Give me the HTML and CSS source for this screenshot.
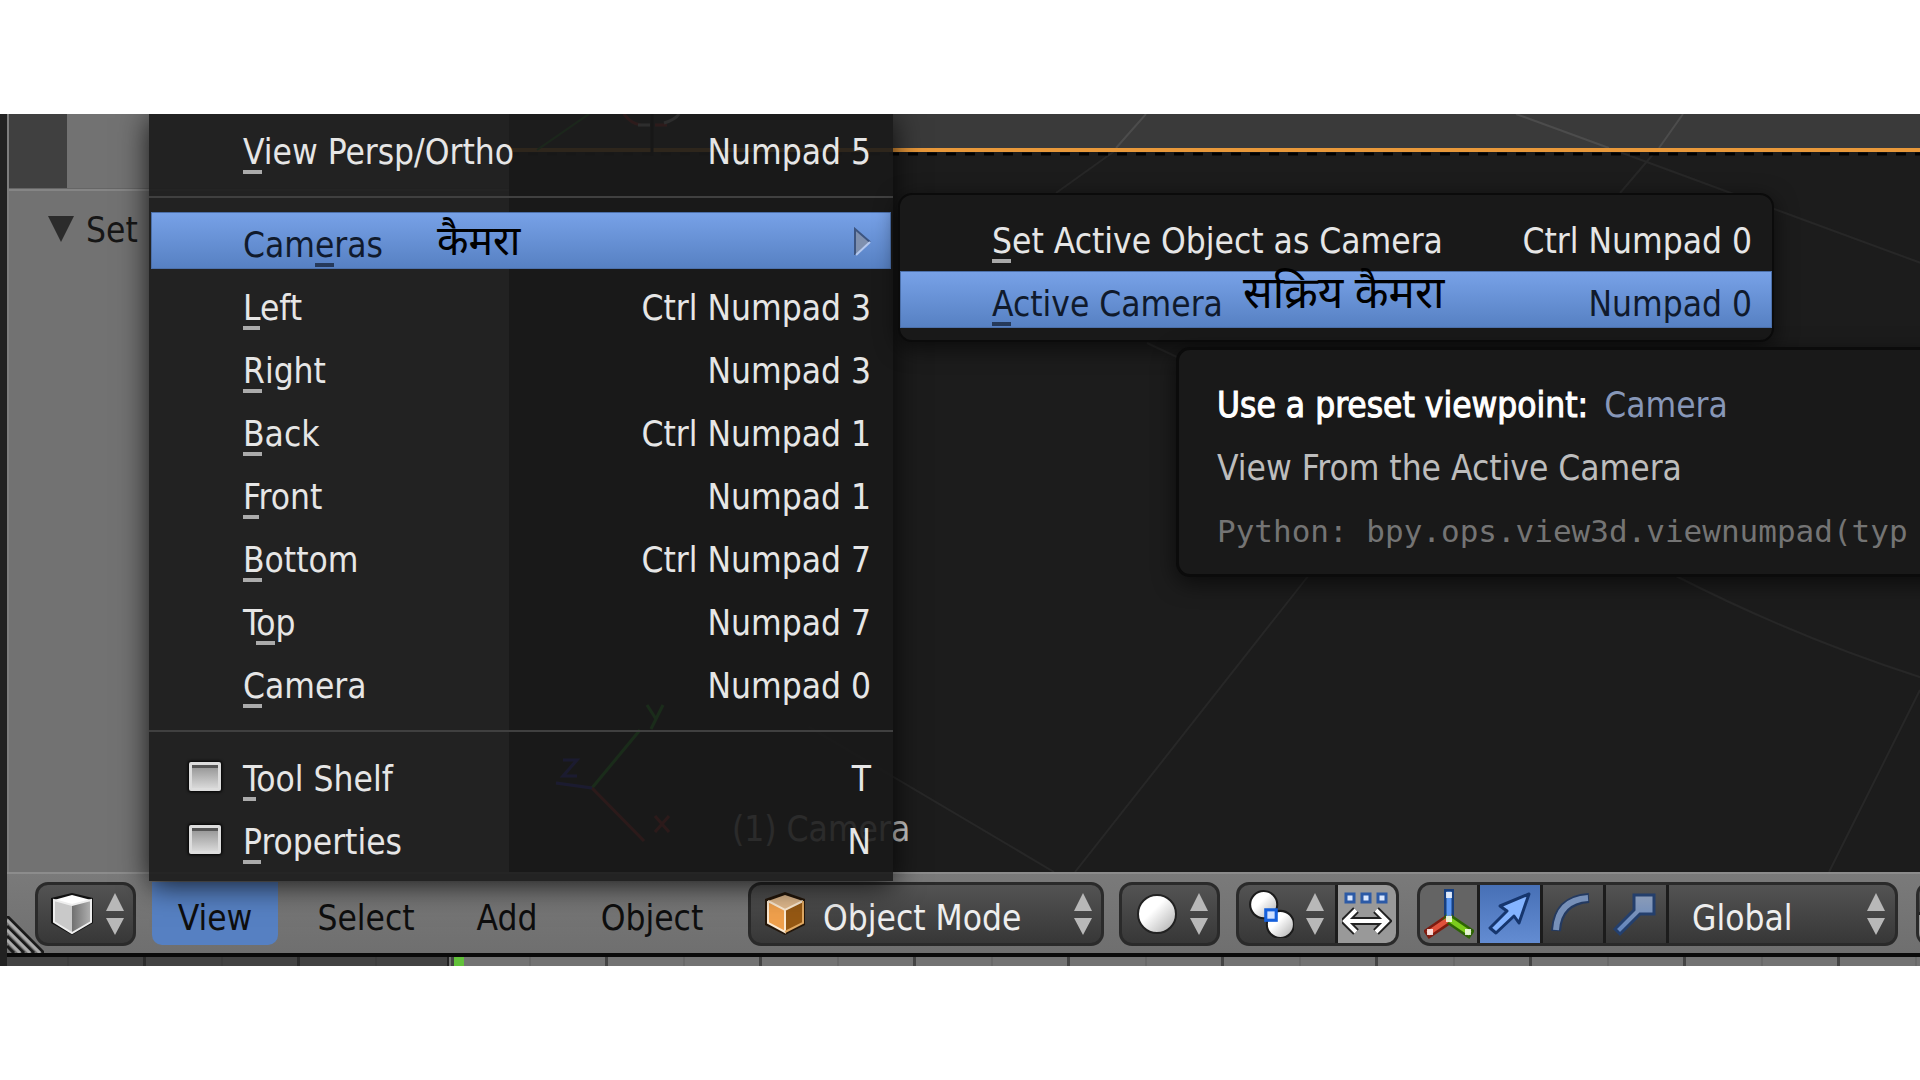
FILE: index.html
```html
<!DOCTYPE html>
<html lang="en">
<head>
<meta charset="utf-8">
<title>3D View</title>
<link rel="stylesheet" href="styles.css">
</head>
<body>
<svg class="defs" aria-hidden="true">
  <defs>
    <linearGradient id="ball" x1="0" y1="0" x2="1" y2="1"><stop offset=".4" stop-color="#fff"/><stop offset="1" stop-color="#a8a8a8"/></linearGradient>
    <linearGradient id="side" x1="0" y1="0" x2="1" y2="0"><stop offset="0" stop-color="#707070"/><stop offset="1" stop-color="#b0b0b0"/></linearGradient>
    <linearGradient id="steel" x1="0" y1="0" x2="0" y2="1"><stop offset="0" stop-color="#8b9cb8"/><stop offset="1" stop-color="#5f83bd"/></linearGradient>
    <symbol id="arrows" viewBox="0 0 18 44"><path d="M9 1L18 19H0zM0 26h18L9 43z" fill="#b8b8b8"/></symbol>
  </defs>
</svg>
<main class="app">
  <div class="editor">
    <aside class="shelf">
      <div class="shelf-tabs"></div>
      <section class="panel">
        <h2 class="panel-title"><svg class="fold" viewBox="0 0 26 26"><path d="M0 0h26L13 26z" fill="#2b2b2b"/></svg>Set</h2>
      </section>
    </aside>
    <section class="viewport" aria-label="3D viewport">
      <svg class="scene" aria-hidden="true">
        <rect width="100%" height="36" fill="#3a3a3a"/>
        <g stroke="#4c4c4c" stroke-width="2" fill="none">
          <path d="M637 0L607 34M1007 0L1100 34M1174 0L1150 34"/>
        </g>
        <g stroke="#272727" stroke-width="2" fill="none">
          <path d="M607 36L547 79M1108 37L1420 152M1146 38L1111 79M638 229L668 243M300 613L545 758M800 461L566 758M1165 461Q1290 525 1420 566M1411 576L1320 758"/>
        </g>
        <path d="M0 40h1420" stroke="#000" stroke-width="3" stroke-dasharray="10 9"/>
        <path d="M0 36h1420" stroke="#e8983a" stroke-width="4"/>
        <path d="M143 0v42" stroke="#000" stroke-width="3"/>
        <path d="M115 0Q122 10 132 11M146 11h12" fill="none" stroke="#e03030" stroke-width="3"/>
        <path d="M129 11h12M155 9Q166 6 170 0" fill="none" stroke="#ddd" stroke-width="3"/>
        <path d="M80 0L28 36" stroke="#30a030" stroke-width="2"/>
        <g fill="none" stroke-width="3">
          <path d="M83 674l48-58M138 591l9 14 7-14M147 605l-5 10" stroke="#20d020"/>
          <path d="M83 674l52 53M146 702l14 16M160 702l-14 16" stroke="#d02020"/>
          <path d="M83 674l-36-5M54 646h14l-14 16h14" stroke="#3030ff"/>
        </g>
      </svg>
      <p class="object-name">(1) Camera</p>
    </section>
  </div>

  <header class="toolbar">
    <svg class="grip" viewBox="0 0 37 37"><g stroke="#1a1a1a" stroke-width="3"><path d="M0 0l37 37M0 10l27 27M0 20l17 17M0 30l7 7"/></g><g stroke="#aaa" stroke-width="3"><path d="M0 4l33 33M0 14l23 23M0 24l13 13"/></g></svg>
    <button class="box picker" aria-label="Editor type">
      <svg class="icon" viewBox="0 0 44 44"><path d="M22 1L43 6V31L22 43 1 31V6z" fill="#111"/><path d="M22 3L41 8 22 13 4 8z" fill="#fff"/><path d="M4 8l18 5v28L4 30z" fill="#c9c9c9"/><path d="M22 13l19-5v22L22 41z" fill="url(#side)"/><path d="M4 8l18 5 19-5v22L22 41 4 30z" fill="none" stroke="#eee" stroke-width="2"/></svg>
      <svg class="arrows"><use href="#arrows"/></svg>
    </button>
    <nav class="menus">
      <button class="menu-title menu-title-view open">View</button>
      <button class="menu-title menu-title-select">Select</button>
      <button class="menu-title menu-title-add">Add</button>
      <button class="menu-title menu-title-object">Object</button>
    </nav>
    <div class="box dropdown mode">
      <svg class="icon" viewBox="0 0 44 44"><path d="M22 0L42 7V33L22 43 2 33V7z" fill="#23160a"/><path d="M22 3L40 9 22 18 5 9z" fill="#dfb88c"/><path d="M5 9l17 9v22L5 31z" fill="#f0a04c"/><path d="M22 18l18-9v22L22 40z" fill="#955813"/><path d="M5 9l17 9 18-9M22 18v22L5 31V9" fill="none" stroke="#fbe9d2" stroke-width="2"/><path d="M40 9v22L22 40" fill="none" stroke="#e0a862" stroke-width="2"/></svg>
      <select aria-label="Mode"><option>Object Mode</option></select>
      <svg class="arrows"><use href="#arrows"/></svg>
    </div>
    <button class="box picker" aria-label="Viewport shading">
      <svg class="icon" viewBox="0 0 44 44"><circle cx="23" cy="22" r="19" fill="url(#ball)" stroke="#222" stroke-width="2"/></svg>
      <svg class="arrows"><use href="#arrows"/></svg>
    </button>
    <div class="box group">
      <button class="cell pivot" aria-label="Pivot point">
        <svg class="icon" viewBox="0 0 44 46"><circle cx="15" cy="14" r="13" fill="url(#ball)" stroke="#1b1b1b" stroke-width="2"/><circle cx="31" cy="33" r="13" fill="url(#ball)" stroke="#1b1b1b" stroke-width="2"/><rect x="17" y="19" width="10" height="10" fill="#cfe0ff" stroke="#1560dc" stroke-width="3"/></svg>
        <svg class="arrows"><use href="#arrows"/></svg>
      </button>
      <button class="cell centers" aria-label="Manipulate center points">
        <svg viewBox="0 0 50 50"><g fill="#dbe8ff" stroke="#2c5aa6" stroke-width="3"><rect x="4" y="5" width="8" height="8"/><rect x="20" y="5" width="8" height="8"/><rect x="36" y="5" width="8" height="8"/></g><path d="M4 32h40M14 21L3 32l11 11M34 21l11 11-11 11" fill="none" stroke="#222" stroke-width="8"/><path d="M4 32h40M14 21L3 32l11 11M34 21l11 11-11 11" fill="none" stroke="#fff" stroke-width="4"/></svg>
      </button>
    </div>
    <div class="box group manipulators">
      <button class="cell axes" aria-label="Manipulator">
        <svg viewBox="0 0 50 50"><g stroke-linecap="square" fill="none"><path d="M25 30V5" stroke="#173e7d" stroke-width="10"/><path d="M25 30L6 43" stroke="#7d1c10" stroke-width="10"/><path d="M25 30l19 13" stroke="#2d6404" stroke-width="10"/><path d="M25 30V5" stroke="#5b97f2" stroke-width="5"/><path d="M25 30L6 43" stroke="#e0523c" stroke-width="5"/><path d="M25 30l19 13" stroke="#7ccc1c" stroke-width="5"/></g><path d="M22 3h6v6h-6zM3 40h6v6H3zM41 40h6v6h-6zM22 27h6v6h-6z" fill="#fff" opacity=".8"/></svg>
      </button>
      <button class="cell on" aria-label="Translate">
        <svg viewBox="0 0 50 50"><path d="M5 39L22 22l-7-5L44 5 34 34l-5-7L11 44z" fill="#84b4ff" stroke="#16366e" stroke-width="3" stroke-linejoin="round"/></svg>
      </button>
      <button class="cell" aria-label="Rotate">
        <svg viewBox="0 0 50 50"><path d="M8 42Q10 11 41 9" fill="none" stroke="#243a60" stroke-width="10"/><path d="M8 41Q10 11 40 9" fill="none" stroke="#7790b8" stroke-width="6"/></svg>
      </button>
      <button class="cell" aria-label="Scale">
        <svg viewBox="0 0 50 50"><path d="M4 40L23 21V6h20v19H29L9 45z" fill="url(#steel)" stroke="#243f6c" stroke-width="3"/></svg>
      </button>
      <div class="dropdown orientation">
        <select aria-label="Transform orientation"><option>Global</option></select>
        <svg class="arrows"><use href="#arrows"/></svg>
      </div>
    </div>
    <div class="box layers"><span class="layer"></span><span class="layer lit"></span></div>
  </header>

  <div class="timeline"><span class="frames"></span><span class="cursor"></span></div>

  <div class="popup view-menu" role="menu">
    <button class="item"><span><span class="key">V</span>iew Persp/Ortho</span><kbd>Numpad 5</kbd></button>
    <hr>
    <button class="item active"><span>Cam<span class="key">e</span>ras</span><span class="note" lang="hi">कैमरा</span>
      <svg class="more" viewBox="0 0 18 30"><path d="M2 2v26L17 15z" fill="#7f90ae"/><path d="M2 28V2l15 13" fill="none" stroke="#3d5580" stroke-width="2"/><path d="M3 28l14-13" stroke="#b4c8ee" stroke-width="2"/></svg></button>
    <button class="item"><span><span class="key">L</span>eft</span><kbd>Ctrl Numpad 3</kbd></button>
    <button class="item"><span><span class="key">R</span>ight</span><kbd>Numpad 3</kbd></button>
    <button class="item"><span><span class="key">B</span>ack</span><kbd>Ctrl Numpad 1</kbd></button>
    <button class="item"><span><span class="key">F</span>ront</span><kbd>Numpad 1</kbd></button>
    <button class="item"><span><span class="key">B</span>ottom</span><kbd>Ctrl Numpad 7</kbd></button>
    <button class="item"><span>T<span class="key">o</span>p</span><kbd>Numpad 7</kbd></button>
    <button class="item"><span><span class="key">C</span>amera</span><kbd>Numpad 0</kbd></button>
    <hr>
    <label class="item check"><input type="checkbox"><span><span class="key">T</span>ool Shelf</span><kbd>T</kbd></label>
    <label class="item check"><input type="checkbox"><span><span class="key">P</span>roperties</span><kbd>N</kbd></label>
  </div>

  <div class="popup submenu" role="menu">
    <button class="item"><span><span class="key">S</span>et Active Object as Camera</span><kbd>Ctrl Numpad 0</kbd></button>
    <button class="item active"><span><span class="key">A</span>ctive Camera</span><span class="note note-large" lang="hi">सक्रिय कैमरा</span><kbd>Numpad 0</kbd></button>
  </div>

  <div class="popup tooltip" role="tooltip">
    <p class="tip-title">Use a preset viewpoint: <span class="tip-value">Camera</span></p>
    <p class="tip-text">View From the Active Camera</p>
    <p class="tip-code">Python: bpy.ops.view3d.viewnumpad(typ</p>
  </div>
</main>
</body>
</html>
```
FILE: styles.css
```css
* { box-sizing: border-box; }

body {
  margin: 0;
  min-height: 100vh;
  padding: 114px 0;
  display: flex;
  flex-direction: column;
  background: #fff;
  font: 35px/57px "DejaVu Sans Condensed", "DejaVu Sans", "Noto Sans", sans-serif;
}

button, select {
  margin: 0;
  padding: 0;
  border: 0;
  background: none;
  color: inherit;
  font: inherit;
  text-align: left;
  appearance: none;
}

h2, p { margin: 0; font-size: inherit; font-weight: normal; }
svg { display: block; flex: none; }
.defs { position: absolute; width: 0; height: 0; }

.app {
  position: relative;
  flex: 1;
  display: flex;
  flex-direction: column;
  padding-left: 7px;
  overflow: hidden;
  background: #222;
}

.editor { flex: 1; display: flex; min-height: 758px; }

/* tool shelf */
.shelf { width: 502px; background: #727272; border-left: 2px solid #7e7e7e; }
.shelf-tabs { height: 75px; background: linear-gradient(90deg, #404040 58px, #727272 58px); border-bottom: 1px solid #666; }
.panel { border-top: 2px solid #858585; padding: 11px 0 0 39px; }
.panel-title { display: flex; align-items: center; gap: 12px; color: #161616; }
.fold { width: 26px; height: 26px; margin-bottom: 4px; }

/* viewport */
.viewport { position: relative; flex: 1; background: #1c1c1c; }
.scene { position: absolute; inset: 0; width: 100%; height: 100%; }
.object-name { position: absolute; left: 223px; bottom: 14px; color: #ccc; }

/* header */
.toolbar {
  position: relative;
  display: flex;
  align-items: center;
  height: 81px;
  padding-left: 28px;
  border-top: 2px solid #8c8c8c;
  background: linear-gradient(#7a7a7a, #6f6f6f);
}
.grip { position: absolute; left: 0; bottom: 0; width: 37px; height: 37px; }

.box {
  display: flex;
  align-items: center;
  flex: none;
  height: 64px;
  border: 3px solid #2a2a2a;
  border-radius: 13px;
  background: linear-gradient(#535353, #373737);
  overflow: hidden;
}
.icon { width: 44px; height: 44px; }
.arrows { width: 18px; height: 44px; }
.picker { width: 101px; gap: 12px; padding-left: 12px; margin-right: 16px; }

.menus { display: flex; gap: 18px; margin-right: 22px; }
.menu-title { height: 63px; padding-top: 8px; color: #0e0e0e; text-align: center; }
.menu-title-view { width: 126px; }
.menu-title-select { width: 140px; }
.menu-title-add { width: 106px; }
.menu-title-object { width: 148px; }
.menu-title.open { background: #5680c2; border-radius: 0 0 10px 10px; }

.dropdown { display: flex; align-items: center; color: #eee; }
.dropdown select { flex: 1; min-width: 0; height: 64px; padding-top: 8px; }
.mode { width: 356px; padding: 0 8px 0 12px; margin-right: 15px; }
.mode select { padding-left: 16px; }
.mode .arrows { margin-right: 1px; }

.group { align-items: stretch; margin-right: 18px; }
.cell { display: flex; align-items: center; justify-content: center; width: 63px; border-right: 3px solid #1c1c1c; }
.cell svg { width: 50px; height: 50px; }
.cell .icon { width: 46px; height: 48px; }
.cell .arrows { width: 18px; height: 44px; }
.pivot { width: 99px; gap: 12px; padding-right: 2px; }
.centers { width: 58px; border: 0; background: #999; }
.axes { width: 60px; background: #646464; }
.cell.on { background: linear-gradient(#4770b6, #638cd2); }
.orientation { width: 226px; padding: 0 10px 0 23px; }

.layers { width: 60px; flex-direction: column; align-items: stretch; margin-right: -60px; }
.layer { flex: 1; background: radial-gradient(circle at 8px 14px, #8a4a08 6px, transparent 7px); }
.layer.lit { background: #999; border-top: 3px solid #222; }

/* timeline */
.timeline {
  position: relative;
  display: flex;
  align-items: stretch;
  height: 13px;
  border-top: 4px solid #0a0a0a;
  background:
    repeating-linear-gradient(90deg, transparent 0 60px, #696969 60px 62px, transparent 62px 136px, #444 136px 139px, transparent 139px 154px),
    #737373;
}
.frames { width: 442px; background: rgba(20, 20, 20, .5); border-right: 2px solid #222; }
.cursor { width: 10px; margin-left: 5px; background: #62c13a; }

/* popups */
.popup {
  position: absolute;
  display: flex;
  flex-direction: column;
  background: rgba(25, 25, 25, .9);
  color: #e6e6e6;
}
.view-menu {
  left: 149px;
  top: 0;
  width: 744px;
  padding: 5px 0 15px;
  box-shadow: 0 4px 28px rgba(0, 0, 0, .8);
}
.submenu {
  left: 898px;
  top: 79px;
  width: 876px;
  padding: 13px 0 12px;
  border: 2px solid #0b0b0b;
  border-radius: 14px;
  background: #191919;
  box-shadow: 0 6px 22px rgba(0, 0, 0, .6);
}
.tooltip {
  left: 1176px;
  right: -40px;
  top: 233px;
  padding: 24px 0 11px 38px;
  border: 3px solid #0b0b0b;
  border-radius: 14px;
  background: #191919;
  box-shadow: 0 6px 22px rgba(0, 0, 0, .6);
  line-height: 63px;
  white-space: nowrap;
}

.item {
  display: flex;
  align-items: center;
  flex: none;
  height: 57px;
  margin: 0 2px 6px;
  padding: 9px 20px 0 92px;
  white-space: nowrap;
}
.submenu .item { margin: 0 0 6px; }
.item:last-child, .submenu .item:last-child { margin-bottom: 0; }
.item kbd { margin-left: auto; font: inherit; }
.item.active { background: linear-gradient(#78a2e8, #5680c2); color: #101a2c; box-shadow: inset 0 0 0 1px #4c70aa; }
.key {
  --mark: color-mix(in srgb, currentColor 70%, transparent);
  padding-bottom: 2px;
  background: linear-gradient(var(--mark), var(--mark)) no-repeat left bottom / 19px 4px;
}

.popup hr { width: 100%; height: 2px; margin: 14px 0; border: 0; background: #404040; }

.check { padding-left: 38px; gap: 22px; }
.check input {
  appearance: none;
  flex: none;
  width: 32px;
  height: 29px;
  margin: 0 0 6px;
  border: 3px solid #ddd;
  border-radius: 2px;
  background: linear-gradient(#555 3px, #9a9a9a 3px, #d8d8d8);
  box-shadow: 0 0 3px 1px #000;
}

.note { margin-left: 54px; color: #000; font-family: "Noto Sans Devanagari", "Noto Sans", sans-serif; font-size: 41px; }
.note-large { margin: 0 0 14px 20px; font-size: 44px; }
.more { width: 18px; height: 30px; margin: 0 3px 6px auto; }
.item.active .more { margin-right: 0; }

.tip-title { color: #fff; -webkit-text-stroke: 1px #fff; }
.tip-value { margin-left: 6px; color: #8797b8; -webkit-text-stroke: 0; }
.tip-text { color: #bdbdbd; }
.tip-code { color: #747474; font-family: "DejaVu Sans Mono", monospace; font-size: 31px; }
```
